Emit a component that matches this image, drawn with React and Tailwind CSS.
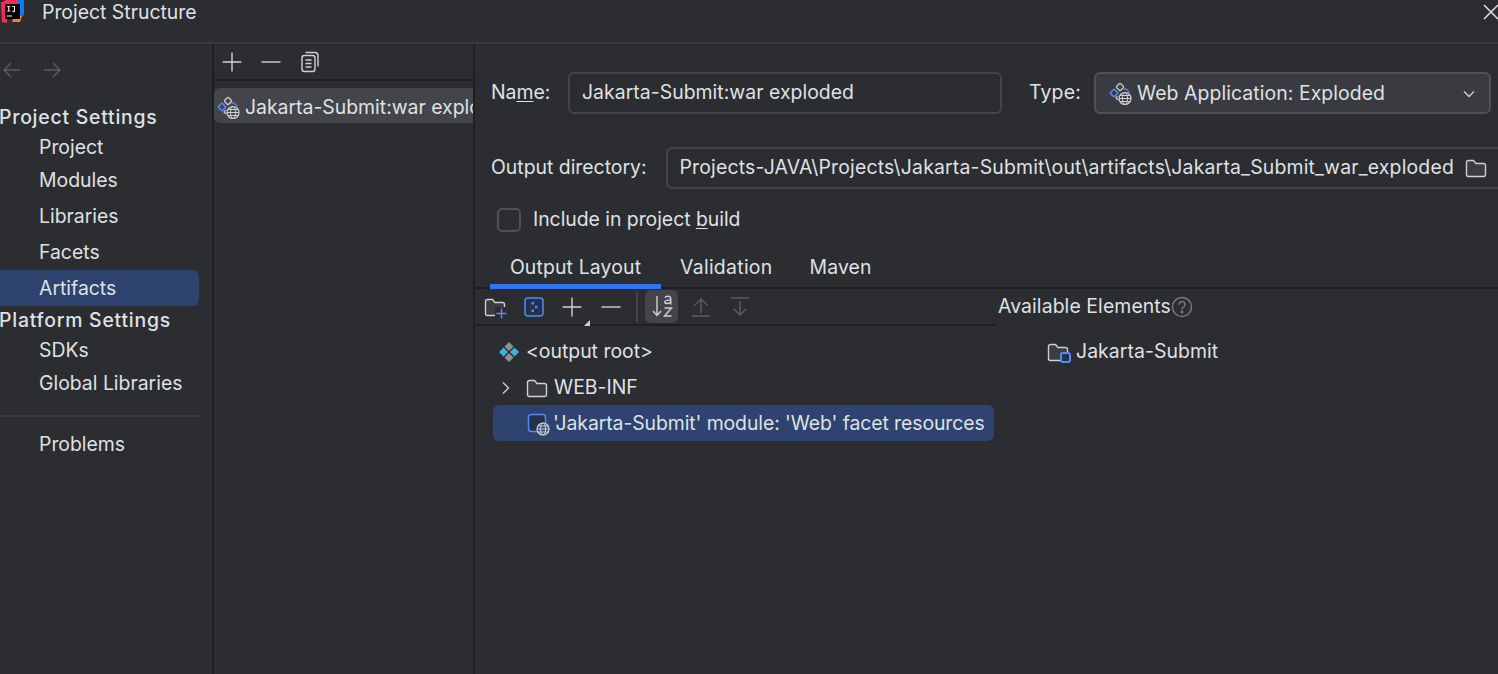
import React from 'react';

const ArtifactIcon = ({ bg = '#2b2d30' }) => (
  <svg viewBox="0 0 24 24" width="24" height="24" fill="none" className="shrink-0">
    <rect x="8.200" y="2.200" width="5.600" height="5.600" rx="1" transform="rotate(45 11 5)" stroke="#ced0d6" strokeWidth="1.200" />
    <rect x="2.200" y="8.200" width="5.600" height="5.600" rx="1" transform="rotate(45 5 11)" stroke="#548af7" strokeWidth="1.500" />
    <path d="M14.500 8l2-1.500 4 4" stroke="#548af7" strokeWidth="1.300" />
    <path d="M8.500 14l-1.500 2 2 2" stroke="#ced0d6" strokeWidth="1.200" />
    <circle cx="16" cy="16.500" r="6" fill={bg} stroke="#ced0d6" strokeWidth="1.200" />
    <ellipse cx="16" cy="16.500" rx="2.500" ry="6" stroke="#ced0d6" strokeWidth="1" />
    <path d="M10 16.500h12M11 13.500h10M11 19.500h10" stroke="#ced0d6" strokeWidth="1" />
  </svg>
);

const Folder = ({ size = 24 }) => (
  <svg viewBox="0 0 24 24" width={size} height={size} fill="none" className="shrink-0">
    <path d="M2.500 6.500a2 2 0 0 1 2-2h5l2.500 3h7.500a2 2 0 0 1 2 2v9a2 2 0 0 1-2 2h-15a2 2 0 0 1-2-2z" fill="#3b3d42" stroke="#ced0d6" strokeWidth="1.400" />
  </svg>
);

const Plus = () => (
  <svg viewBox="0 0 24 24" width="24" height="24" fill="none" stroke="#ced0d6" strokeWidth="1.400" className="shrink-0">
    <path d="M12 2.500v19M2.500 12h19" />
  </svg>
);

const Minus = () => (
  <svg viewBox="0 0 24 24" width="24" height="24" fill="none" stroke="#ced0d6" strokeWidth="1.400" className="shrink-0">
    <path d="M2.500 12h19" />
  </svg>
);

const SideItem = ({ label, active, className = 'h-9' }) => (
  <div className={`flex items-center pl-[39px] w-[199px] rounded-r-md ${active ? 'bg-[#2e436e]' : ''} ${className}`}>
    {label}
  </div>
);

const SideTitle = ({ label, className = '' }) => (
  <div className={`flex items-center font-medium tracking-[0.78px] -ml-px whitespace-nowrap ${className}`}>{label}</div>
);

const Sidebar = () => (
  <aside className="w-[212px] shrink-0 flex flex-col">
    <div className="h-[56px] flex items-center gap-[20px] pl-[2px] pb-[4px]">
      <svg viewBox="0 0 20 20" width="20" height="20" fill="none" stroke="#5a5d63" strokeWidth="1.400"><path d="M18 10H2M9 3l-7 7 7 7" /></svg>
      <svg viewBox="0 0 20 20" width="20" height="20" fill="none" stroke="#5a5d63" strokeWidth="1.400"><path d="M2 10h16M11 3l7 7-7 7" /></svg>
    </div>
    <SideTitle label="Project Settings" className="h-[34px] pt-[2px]" />
    <SideItem label="Project" className="h-[28px]" />
    <SideItem label="Modules" className="h-[37px]" />
    <SideItem label="Libraries" />
    <SideItem label="Facets" className="h-[35px]" />
    <SideItem label="Artifacts" active className="h-[36px] pt-[1px]" />
    <SideTitle label="Platform Settings" className="h-[30px]" />
    <SideItem label="SDKs" className="h-[30px]" />
    <SideItem label="Global Libraries" />
    <div className="h-[2px] w-[199px] bg-[#393b40] mt-[13px]" />
    <SideItem label="Problems" className="h-[44px] mt-[6px]" />
  </aside>
);

const ArtifactList = () => (
  <section className="w-[263px] shrink-0 border-x-2 border-[#1e1f22] flex flex-col overflow-hidden">
    <div className="h-[37px] shrink-0 flex items-center gap-[15px] pl-[6px] border-b-2 border-[#1e1f22]">
      <Plus />
      <Minus />
      <svg viewBox="0 0 24 24" width="24" height="24" fill="none" stroke="#ced0d6" strokeWidth="1.400">
        <rect x="4" y="5.500" width="13" height="16" rx="2.500" />
        <path d="M7.500 2.500h9.500a3 3 0 0 1 3 3v11" />
        <path d="M7.500 10h6M7.500 13.500h6M7.500 17h6" />
      </svg>
    </div>
    <div className="mt-[7px] h-[35px] rounded-l-md bg-[#43454a] flex items-center pl-[3px] pt-[4px] gap-[4px] overflow-hidden whitespace-nowrap">
      <ArtifactIcon bg="#43454a" />
      <span>Jakarta-Submit:war exploded</span>
    </div>
  </section>
);

const Settings = () => (
  <div className="pl-[16px] pt-[28px]">
    <div className="flex items-center h-[42px]">
      <span className="w-[77px]">Na<span className="underline underline-offset-2">m</span>e:</span>
      <div className="w-[434px] h-[42px] rounded-md border-2 border-[#43454a] flex items-center px-[12px] tracking-[0.04px]">Jakarta-Submit:war exploded</div>
      <span className="ml-[28px] w-[64px] -translate-x-px tracking-[0.2px]">Type:</span>
      <div className="w-[397px] h-[42px] rounded-md border-2 border-[#4e5157] bg-[#393b40] flex items-center pl-[13px] pr-[12px] pt-[2px] gap-[4px] tracking-[0.08px]">
        <ArtifactIcon bg="#393b40" />
        <span className="flex-1">Web Application: Exploded</span>
        <svg viewBox="0 0 16 16" width="16" height="16" fill="none" stroke="#ced0d6" strokeWidth="1.400"><path d="M3 5.500l5 5 5-5" /></svg>
      </div>
    </div>
    <div className="flex items-center h-[42px] mt-[33px]">
      <span className="w-[175px] whitespace-nowrap">Output directory:</span>
      <div className="flex-1 h-[42px] rounded-l-md border-2 border-r-0 border-[#43454a] flex items-center pl-[11px] pr-[10px] gap-[10px] min-w-0">
        <div className="flex-1 overflow-hidden whitespace-nowrap flex justify-end">
          <span className="shrink-0 tracking-[0.19px]">\IdeaProjects-JAVA\Projects\Jakarta-Submit\out\artifacts\Jakarta_Submit_war_exploded</span>
        </div>
        <Folder size={24} />
      </div>
    </div>
    <div className="flex items-center h-[24px] mt-[19px] pl-[6px] gap-[12px]">
      <div className="w-[24px] h-[24px] rounded-[5px] border-2 border-[#4e5157]" />
      <span className="tracking-[-0.03px]">Include in project <span className="underline underline-offset-2">b</span>uild</span>
    </div>
  </div>
);

const Tabs = () => (
  <div className="h-[46px] mt-[11px] flex items-stretch border-b-2 border-[#1e1f22] pl-[15px]">
    <div className="w-[171px] flex items-center justify-center border-b-[5px] border-[#3574f0] -mb-[2px] pt-[9px] tracking-[0.15px]">Output Layout</div>
    <div className="ml-[19px] flex items-center pt-[5px] tracking-[0.3px]">Validation</div>
    <div className="ml-[38px] flex items-center pt-[5px] tracking-[0.1px] -translate-x-px">Maven</div>
  </div>
);

const Toolbar = () => (
  <div className="h-[37px] border-b-2 border-[#1e1f22] flex items-center pl-[8px]">
    <div className="relative w-[24px] h-[24px]">
      <Folder size={24} />
      <svg viewBox="0 0 13 13" width="13" height="13" fill="none" stroke="#548af7" strokeWidth="1.500" className="absolute right-[-1px] bottom-[-1px]">
        <rect width="13" height="13" fill="#2b2d30" stroke="none" />
        <path d="M6.500 1.500v10M1.500 6.500h10" />
      </svg>
    </div>
    <svg viewBox="0 0 24 24" width="24" height="24" fill="none" className="ml-[15px]">
      <rect x="3" y="3" width="18" height="18" rx="3" fill="#25324d" stroke="#548af7" strokeWidth="1.500" />
      <path d="M9.500 7h2.500v2.500h-2.500zM13 10.800h2.500v2.500h-2.500zM9.500 14.500h2.500v2.500h-2.500z" fill="#548af7" />
    </svg>
    <div className="relative w-[24px] h-[24px] ml-[14px]">
      <Plus />
      <div className="absolute right-[-6px] bottom-[-7px] w-0 h-0 border-l-[6px] border-l-transparent border-b-[6px] border-b-[#ced0d6]" />
    </div>
    <div className="ml-[15px]"><Minus /></div>
    <div className="w-[2px] h-[30px] bg-[#43454a] ml-[13px]" />
    <div className="ml-[7px] w-[33px] h-[33px] rounded-md bg-[#43454a]">
      <svg viewBox="0 0 33 33" width="33" height="33" fill="none" stroke="#ced0d6" strokeWidth="1.400">
        <path d="M12 6v19M8 21l4 4.500 4-4.500" />
        <path d="M19.800 7.500c.6-1 1.800-1.300 3-1.300 2 0 3 1 3 2.800v5.500" />
        <path d="M25.800 10c-1 .3-6-.5-6 2 0 2 4.500 2 6 0" />
        <path d="M19.500 18h7l-7 8h7" />
      </svg>
    </div>
    <svg viewBox="0 0 24 24" width="24" height="24" fill="none" stroke="#5a5d63" strokeWidth="1.400" className="ml-[11px]"><path d="M12 18V4M5.500 10.500L12 4l6.500 6.500M3 21h18" /></svg>
    <svg viewBox="0 0 24 24" width="24" height="24" fill="none" stroke="#5a5d63" strokeWidth="1.400" className="ml-[15px]"><path d="M12 6v14M5.500 13.500L12 20l6.500-6.500M3 3h18" /></svg>
  </div>
);

const Tree = () => (
  <div className="pt-[7px] pl-[18px] pr-[2px] whitespace-nowrap">
    <div className="h-9 flex items-center pl-[5px] gap-[6px] pt-[2px]">
      <svg viewBox="0 0 22 22" width="22" height="22" className="shrink-0">
        <path d="M11 1l4.500 4.500-4.500 4.500-4.500-4.500zM11 12l4.500 4.500-4.500 4.500-4.500-4.500z" fill="#8e9196" />
        <path d="M5.500 6.500l4.500 4.500-4.500 4.500-4.500-4.500zM16.500 6.500l4.500 4.500-4.500 4.500-4.500-4.500z" fill="#3fb3e0" />
      </svg>
      <span>&lt;output root&gt;</span>
    </div>
    <div className="h-9 flex items-center pl-[5px] pt-[2px]">
      <svg viewBox="0 0 16 16" width="16" height="16" fill="none" stroke="#ced0d6" strokeWidth="1.400" className="shrink-0"><path d="M5 2.500l5.500 5.500-5.500 5.500" /></svg>
      <div className="ml-[11px]"><Folder size={24} /></div>
      <span className="ml-[5px] tracking-[0.03px]">WEB-INF</span>
    </div>
    <div className="h-9 w-[501px] flex items-center rounded-md bg-[#2e436e] pl-[33px] pt-[2px]">
      <svg viewBox="0 0 24 24" width="24" height="24" fill="none" className="shrink-0">
        <rect x="2.500" y="2.500" width="17" height="17" rx="3" fill="#25324d" stroke="#548af7" strokeWidth="1.500" />
        <circle cx="17" cy="17" r="6" fill="#2e436e" stroke="#ced0d6" strokeWidth="1.200" />
        <ellipse cx="17" cy="17" rx="2.500" ry="6" stroke="#ced0d6" strokeWidth="1" />
        <path d="M11 17h12M12 14h10M12 20h10" stroke="#ced0d6" strokeWidth="1" />
      </svg>
      <span className="ml-[3px] tracking-[-0.08px]">'Jakarta-Submit' module: 'Web' facet resources</span>
    </div>
  </div>
);

const Available = () => (
  <div className="whitespace-nowrap pl-[2px]">
    <div className="h-[36px] flex items-center tracking-[0.1px]">
      Available Elements
      <svg viewBox="0 0 22 22" width="22" height="22" fill="none" stroke="#7a7d83" strokeWidth="1.400" className="shrink-0">
        <circle cx="11" cy="11" r="9.500" />
        <path d="M8 8.500a3 3 0 1 1 4.500 2.600c-1 .6-1.500 1.200-1.500 2.400" />
        <circle cx="11" cy="16" r=".8" fill="#7a7d83" />
      </svg>
    </div>
    <div className="h-9 mt-[8px] pl-[48px] pt-[2px] flex items-center">
      <div className="relative w-[24px] h-[24px] shrink-0">
        <Folder size={24} />
        <div className="absolute right-[-1px] bottom-[1px] w-[11px] h-[11px] rounded-[3px] bg-[#25324d] border-2 border-[#548af7]" />
      </div>
      <span className="ml-[6px] tracking-[0.07px]">Jakarta-Submit</span>
    </div>
  </div>
);

export default function App() {
  return (
    <div className="w-[1498px] h-[674px] overflow-hidden bg-[#2b2d30] flex flex-col font-['Inter',sans-serif] text-[19.4px] text-[#dfe1e5]">
      <header className="h-[44px] shrink-0 border-b-2 border-[#393b40] relative flex items-start">
        <svg viewBox="0 0 24 24" width="24" height="24" className="shrink-0">
          <path d="M15 0h9v15l-5 3z" fill="#087cfa" />
          <path d="M1 3l5-3h11v8z" fill="#fe2857" />
          <path d="M1 2h6v21l-5-1z" fill="#fe2857" />
          <path d="M14 16h8l-2 6h-8z" fill="#fc801d" />
          <rect x="5" y="4" width="15" height="15" fill="#000" />
          <path d="M7 6h3.500v.8h-1.200v3.900h1.200v.8h-3.500v-.8h1.200v-3.900h-1.200zM12 6h3v4.500a1.300 1.300 0 0 1-2.800.6l.7-.5c.2.4 1.100.4 1.100-.2v-3.600h-2zM7 15.500h5v1h-5z" fill="#fff" />
        </svg>
        <span className="ml-[18px] mt-[-4px] leading-[32px]">Project Structure</span>
        <svg viewBox="0 0 16 16" width="16" height="16" fill="none" stroke="#dfe1e5" strokeWidth="1.500" className="absolute left-[1483px] top-[4px]"><path d="M1 1l14 14M15 1L1 15" /></svg>
      </header>
      <div className="flex-1 flex min-h-0">
        <Sidebar />
        <ArtifactList />
        <main className="flex-1 min-w-0 flex flex-col">
          <Settings />
          <Tabs />
          <div className="flex">
            <div className="w-[521px] shrink-0">
              <Toolbar />
              <Tree />
            </div>
            <Available />
          </div>
        </main>
      </div>
    </div>
  );
}
